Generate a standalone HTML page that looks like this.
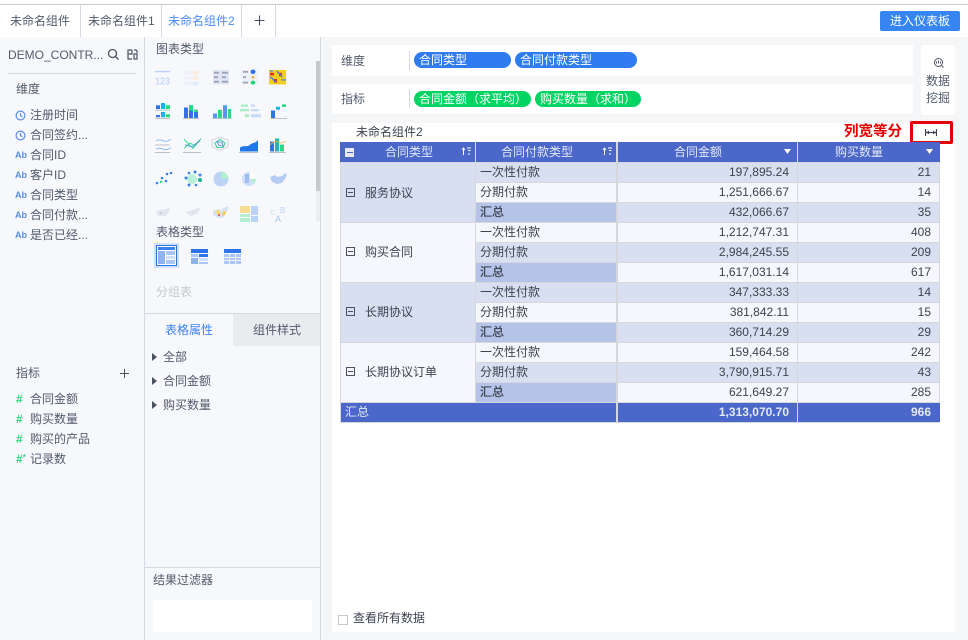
<!DOCTYPE html>
<html lang="zh"><head><meta charset="utf-8"><style>
*{box-sizing:border-box}
html,body{margin:0;padding:0}
body{width:968px;height:640px;position:relative;overflow:hidden;background:#f5f6f8;font:12px "Liberation Sans","Noto Sans CJK SC",sans-serif;color:#525a6c}
.a,.t,.r{position:absolute}
.t{white-space:nowrap;line-height:16px}
.sep{position:absolute;background:#d5dae2}
.c{position:absolute;white-space:nowrap;line-height:19px;height:19px;color:#3d4350;padding-left:4px}
.n{text-align:right;padding:0 8px 0 0;color:#3d4350}
.l{background:#d8dff1}.w{background:#f5f7fc}.s{background:#b5c3e9;-webkit-text-stroke:.25px #3d4350}
.pill{position:absolute;height:16px;border-radius:8px;color:#fff;line-height:16px;padding-left:5px;white-space:nowrap}
</style></head><body>
<div class="a" style="left:0;top:37px;width:320px;height:603px;background:#f7f8fb"></div>
<div class="a" style="left:0;top:0;width:968px;height:37px;background:#fff"></div>
<div class="a" style="left:0;top:4px;width:968px;height:1px;background:#c9c9c9"></div>
<div class="t" style="left:10px;top:13px">未命名组件</div>
<div class="t" style="left:88px;top:13px">未命名组件1</div>
<div class="t" style="left:168px;top:13px;color:#4a8cf5">未命名组件2</div>
<svg class="a" style="left:254px;top:15px" width="11" height="11" stroke="#4a5264" stroke-width="1.100"><path d="M5.500 .5v10M.5 5.500h10"/></svg>
<div class="sep" style="left:80px;top:5px;width:1px;height:32px"></div>
<div class="sep" style="left:161px;top:5px;width:1px;height:32px"></div>
<div class="sep" style="left:241px;top:5px;width:1px;height:32px"></div>
<div class="sep" style="left:275px;top:5px;width:1px;height:32px"></div>
<div class="a" style="left:880px;top:11px;width:80px;height:20px;background:#3685f2;border-radius:2px;color:#fff;text-align:center;line-height:20px">进入仪表板</div>

<!-- left panel -->
<div class="sep" style="left:144px;top:37px;width:1px;height:603px"></div>
<div class="t" style="left:8px;top:47px">DEMO_CONTR...</div>
<svg class="a" style="left:107px;top:48px" width="13" height="13" viewBox="0 0 13 13" fill="none" stroke="#4a5264" stroke-width="1.300"><circle cx="5.500" cy="5.500" r="4"/><path d="M8.500 8.500L11.500 11.500"/></svg>
<svg class="a" style="left:126px;top:48px" width="13" height="13" viewBox="0 0 13 13" fill="none" stroke="#4a5264" stroke-width="1.200"><path d="M6 2H2v9h4M6 2v4H2M8 2h2l1 1v2M8 6h3v5H8z"/></svg>
<div class="sep" style="left:8px;top:73px;width:128px;height:1px"></div>
<div class="t" style="left:16px;top:81px">维度</div>
<div class="t" style="left:30px;top:107px">注册时间</div>
<div class="t" style="left:30px;top:127px">合同签约...</div>
<div class="t" style="left:30px;top:147px">合同ID</div>
<div class="t" style="left:30px;top:167px">客户ID</div>
<div class="t" style="left:30px;top:187px">合同类型</div>
<div class="t" style="left:30px;top:207px">合同付款...</div>
<div class="t" style="left:30px;top:227px">是否已经...</div>
<svg class="a" style="left:15px;top:110px" width="11" height="11" viewBox="0 0 11 11" fill="none" stroke="#5b8de8" stroke-width="1.200"><circle cx="5.500" cy="5.500" r="4.400"/><path d="M5.500 3v2.700l2 1"/></svg>
<svg class="a" style="left:15px;top:130px" width="11" height="11" viewBox="0 0 11 11" fill="none" stroke="#5b8de8" stroke-width="1.200"><circle cx="5.500" cy="5.500" r="4.400"/><path d="M5.500 3v2.700l2 1"/></svg>
<div class="t" style="left:15px;top:147px;font-size:9px;color:#5b8de8;font-weight:bold">Ab</div>
<div class="t" style="left:15px;top:167px;font-size:9px;color:#5b8de8;font-weight:bold">Ab</div>
<div class="t" style="left:15px;top:187px;font-size:9px;color:#5b8de8;font-weight:bold">Ab</div>
<div class="t" style="left:15px;top:207px;font-size:9px;color:#5b8de8;font-weight:bold">Ab</div>
<div class="t" style="left:15px;top:227px;font-size:9px;color:#5b8de8;font-weight:bold">Ab</div>
<div class="t" style="left:16px;top:365px">指标</div>
<svg class="a" style="left:119px;top:368px" width="11" height="11" stroke="#4a5264" stroke-width="1"><path d="M5.500 1v9M1 5.500h9"/></svg>
<div class="t" style="left:30px;top:391px">合同金额</div>
<div class="t" style="left:30px;top:411px">购买数量</div>
<div class="t" style="left:30px;top:431px">购买的产品</div>
<div class="t" style="left:30px;top:451px">记录数</div>
<div class="t" style="left:16px;top:391px;color:#2fd67f;font-weight:bold">#</div>
<div class="t" style="left:16px;top:411px;color:#2fd67f;font-weight:bold">#</div>
<div class="t" style="left:16px;top:431px;color:#2fd67f;font-weight:bold">#</div>
<div class="t" style="left:16px;top:451px;color:#2fd67f;font-weight:bold">#<span style="font-size:8px;position:relative;top:-3px">*</span></div>

<!-- chart panel -->
<div class="a" style="left:320px;top:37px;width:1px;height:603px;background:#d5dae2"></div>
<div class="a" style="left:316px;top:61px;width:4px;height:130px;background:#c6c9cd"></div>
<div class="a" style="left:316px;top:191px;width:4px;height:30px;background:#eceef0"></div>
<div class="t" style="left:156px;top:41px">图表类型</div>

<svg class="a" style="left:153px;top:68px" width="150" height="155" viewBox="0 0 150 155">
<!-- row 1 -->
<g transform="translate(0,.2) scale(1,.9)">
<g opacity=".8"><rect x="2" y="3" width="15" height="1.500" fill="#a9c6f7"/><text x="2" y="18" font-size="11" font-weight="bold" fill="#b9d1f8" font-family="Liberation Sans" textLength="15" lengthAdjust="spacingAndGlyphs">123</text></g>
<g opacity=".55"><g fill="#e8ecf4"><rect x="31" y="3" width="15" height="4"/><rect x="31" y="9" width="15" height="4"/><rect x="31" y="15" width="15" height="4"/></g><rect x="40" y="3" width="5" height="4" fill="#fbe3bd"/><rect x="40" y="9" width="5" height="4" fill="#fbe3bd"/><rect x="40" y="15" width="5" height="4" fill="#cfe1fb"/></g>
<g fill="#dfe5f3"><rect x="60" y="2" width="16" height="16"/></g><g fill="#9aa2b4"><rect x="61" y="4" width="5" height="2"/><rect x="69" y="4" width="6" height="2"/><rect x="61" y="9" width="4" height="2"/><rect x="69" y="9" width="4" height="2"/><rect x="61" y="14" width="5" height="2"/><rect x="69" y="14" width="6" height="2"/></g>
<rect x="88" y="2" width="17" height="16" fill="#eef1f8"/><circle cx="100" cy="4" r="2.500" fill="#2d74ea"/><circle cx="100" cy="10" r="1.500" fill="#f5b13d"/><circle cx="100" cy="16" r="2.200" fill="#12d66f"/><g fill="#9aa3b5"><rect x="90" y="3" width="5" height="2"/><rect x="90" y="9" width="3" height="2"/><rect x="90" y="15" width="5" height="2"/></g>
<rect x="116" y="2" width="17" height="16" fill="#f4cf1e"/><path d="M117 5h4v3h-4zM121 12h3v4h-3zM126 5h3v4h-3z" fill="#e6332a"/><path d="M117 10c3 0 3 5 6 5M124 3c1 4 5 3 5 7M128 13h5M117 3h3" stroke="#3f7fe8" stroke-width="1.300" fill="none"/>
</g>
<!-- row 2 -->
<g transform="translate(0,9.500) scale(1,.75)">
<g fill="#2d74ea"><rect x="3" y="37" width="4" height="5"/><rect x="3" y="50" width="4" height="3"/></g><g fill="#0fb8e8"><rect x="8" y="34" width="4" height="8"/><rect x="8" y="46" width="4" height="7"/></g><g fill="#2ad885"><rect x="13" y="37" width="4" height="5"/><rect x="13" y="49" width="4" height="4"/></g><rect x="2" y="43" width="15" height="1" fill="#aab0bf"/><rect x="2" y="54" width="15" height="1" fill="#aab0bf"/>
<rect x="31" y="40" width="4" height="14" fill="#2d74ea"/><rect x="36" y="37" width="4" height="17" fill="#2d74ea"/><rect x="36" y="37" width="4" height="7" fill="#2ad885"/><rect x="41" y="43" width="4" height="11" fill="#2d74ea"/><rect x="41" y="43" width="4" height="3" fill="#2ad885"/><rect x="30" y="54" width="16" height="1" fill="#aab0bf"/>
<rect x="60" y="48" width="4" height="6" fill="#5b94f0"/><rect x="65" y="43" width="4" height="11" fill="#2ad885"/><rect x="70" y="37" width="4" height="17" fill="#5b94f0"/><rect x="75" y="42" width="3" height="12" fill="#2ad885"/><rect x="59" y="54" width="20" height="1" fill="#aab0bf"/>
<g fill="#a9ecc8"><rect x="88" y="36" width="7" height="3"/><rect x="87" y="42" width="9" height="3"/><rect x="92" y="49" width="4" height="4"/></g><g fill="#c5d9f8"><rect x="98" y="36" width="4" height="3"/><rect x="98" y="42" width="8" height="3"/><rect x="98" y="49" width="10" height="4"/></g>
<rect x="118" y="44" width="4" height="10" fill="#2d74ea"/><rect x="123" y="39" width="4" height="4" fill="#0fb8e8"/><rect x="129" y="36" width="4" height="3" fill="#12d66f"/><rect x="118" y="54" width="16" height="1" fill="#aab0bf"/>
</g>
<!-- row 3 -->
<g transform="translate(0,15.800) scale(1,.76)">
<g fill="none" stroke="#7faaf0" stroke-width="1"><path d="M3 75c5-4 8 3 12 0l3-2"/><path d="M3 86c5-4 8 3 12 0l3-2"/></g><rect x="2" y="80" width="15" height="1" fill="#aab0bf"/><rect x="2" y="90" width="15" height="1" fill="#aab0bf"/>
<path d="M31 73l9 12 8-13M31 85l6-7 4 3 6-7" fill="none" stroke="#2ad885" stroke-width="1"/><path d="M32 80l7 3 8-8" fill="none" stroke="#4f8ff0" stroke-width="1"/><rect x="30" y="90" width="18" height="1" fill="#aab0bf"/>
<path d="M67 70l8 4v9l-8 5-8-5v-9z" fill="#f1f3f7" stroke="#cfd3db"/><path d="M67 73l5 5-2 6h-6l-2-6z" fill="none" stroke="#25cf80"/><path d="M64 76l5 1 1 5-4-1z" fill="none" stroke="#4f8ff0"/>
<path d="M87 89v-5c4-4 8 0 10-4 3-3 5-1 8-6v15z" fill="#1f76e8"/><rect x="86" y="90" width="19" height="1" fill="#aab0bf"/>
<rect x="117" y="76" width="4" height="13" fill="#2d74ea"/><rect x="122" y="72" width="4" height="17" fill="#22b8a8"/><rect x="127" y="80" width="4" height="9" fill="#2ad885"/><path d="M117 80l6-5 4 3 6-2" stroke="#f5b13d" fill="none"/><rect x="116" y="90" width="17" height="1" fill="#aab0bf"/>
</g>
<!-- row 4 -->
<g fill="#3c7ff0"><circle cx="4" cy="115" r="1.300"/><circle cx="9" cy="110" r="1.300"/><circle cx="14" cy="106" r="1.300"/><circle cx="18" cy="105" r="1.300"/><circle cx="13" cy="113" r="1.300"/></g><circle cx="8" cy="114" r="1.200" fill="#2ad885"/>
<circle cx="39" cy="111" r="5" fill="#b9efd6"/><g fill="#3c7ff0"><circle cx="33" cy="110" r="1.500"/><circle cx="36" cy="105" r="1.300"/><circle cx="42" cy="104" r="1.500"/><circle cx="47" cy="107" r="1.500"/><circle cx="36" cy="117" r="1.500"/><circle cx="43" cy="117" r="1.300"/></g><circle cx="47" cy="112" r="2" fill="#14b59a"/>
<circle cx="68" cy="111" r="7.500" fill="#bcd3f8"/><path d="M68 111v-7.500a7.500 7.500 0 0 1 7.500 7.500z" fill="#b5edd0"/>
<circle cx="96" cy="111" r="7" fill="#cddffa"/><path d="M97 111v-7a7 7 0 0 1 6 7z" fill="#fff"/><path d="M97 111h6a7 7 0 0 1-2 5z" fill="#b5edd0"/><path d="M92 106h4v9h-4z" fill="#9dbdf0"/>
<path d="M117 109l5-2 2 2 5-1 3-3 2 2-2 4-3 4-5 1-5-2z" fill="#b6cdf3"/>
<!-- row 5 -->
<g opacity=".55"><path d="M3 144l5-3 3 1 6-3-1 5-3 4-8 0z" fill="#cfd8e8"/><circle cx="8" cy="145" r="1" fill="#8aa"/><path d="M32 144l8-2 8-3-3 6-7 3z" fill="#cfd8e8"/></g>
<path d="M60 143l5-2 3 1 6-4 2 2-3 5-3 5-5 0-5-3z" fill="#d7e3f5"/><path d="M62 143l4-1 2 3-3 2z" fill="#f7d973"/><path d="M70 144l3-1-1 4-3 1z" fill="#f6c83c"/><circle cx="66" cy="147" r="1" fill="#e34"/>
<rect x="87" y="138" width="10" height="7" fill="#f4dc95"/><rect x="87" y="146" width="10" height="3" fill="#b5edd0"/><rect x="87" y="150" width="10" height="4" fill="#b5edd0"/><rect x="98" y="138" width="7" height="9" fill="#bcd3f8"/><rect x="98" y="148" width="7" height="6" fill="#bcd3f8"/>
<text x="117" y="147" font-size="7" fill="#b5edd0" font-family="Liberation Sans">C</text><text x="122" y="154" font-size="9" fill="#a9c6f7" font-family="Liberation Sans">A</text><text x="127" y="145" font-size="8" fill="#bcd3f8" font-family="Liberation Sans">B</text>
</svg>

<div class="t" style="left:156px;top:224px">表格类型</div>
<div class="a" style="left:154px;top:243px;width:25px;height:25px;background:#cfe0fb"></div>
<div class="a" style="left:156px;top:245px;width:21px;height:21px;border:1px solid #2f74e6;background:#fff"></div>
<svg class="a" style="left:158px;top:247px" width="17" height="17"><rect width="17" height="3" fill="#3b82f0"/><rect y="4" width="7" height="13" fill="#8fb3ee"/><rect x="8" y="4" width="9" height="4" fill="#a9c6f7"/><rect x="8" y="9" width="9" height="3" fill="#cfe0fb"/><rect x="8" y="13" width="9" height="4" fill="#a9c6f7"/></svg>
<svg class="a" style="left:191px;top:249px" width="17" height="15"><rect width="17" height="4" fill="#2d74ea"/><rect y="5" width="7" height="3" fill="#a9c6f7"/><rect x="8" y="5" width="9" height="3" fill="#2d74ea"/><rect y="9" width="7" height="6" fill="#8fb3ee"/><rect x="8" y="9" width="9" height="3" fill="#cfe0fb"/><rect x="8" y="13" width="9" height="2" fill="#a9c6f7"/></svg>
<svg class="a" style="left:224px;top:249px" width="17" height="15"><rect width="17" height="4" fill="#2d74ea"/><g fill="#a9c6f7"><rect y="5" width="5" height="3"/><rect x="6" y="5" width="5" height="3"/><rect x="12" y="5" width="5" height="3"/><rect y="9" width="5" height="2"/><rect x="6" y="9" width="5" height="2"/><rect x="12" y="9" width="5" height="2"/><rect y="12" width="5" height="3"/><rect x="6" y="12" width="5" height="3"/><rect x="12" y="12" width="5" height="3"/></g></svg>
<div class="t" style="left:156px;top:284px;color:#c5c8ce">分组表</div>

<div class="a" style="left:145px;top:313px;width:175px;height:1px;background:#d5dae2"></div>
<div class="a" style="left:233px;top:314px;width:87px;height:32px;background:#e9ebef"></div>
<div class="t" style="left:165px;top:322px;color:#3d84f0">表格属性</div>
<div class="t" style="left:253px;top:322px">组件样式</div>
<svg class="a" style="left:152px;top:353px" width="6" height="8"><path d="M0 0l5 4-5 4z" fill="#4a5264"/></svg>
<svg class="a" style="left:152px;top:377px" width="6" height="8"><path d="M0 0l5 4-5 4z" fill="#4a5264"/></svg>
<svg class="a" style="left:152px;top:401px" width="6" height="8"><path d="M0 0l5 4-5 4z" fill="#4a5264"/></svg>
<div class="t" style="left:163px;top:349px">全部</div>
<div class="t" style="left:163px;top:373px">合同金额</div>
<div class="t" style="left:163px;top:397px">购买数量</div>
<div class="a" style="left:145px;top:567px;width:175px;height:1px;background:#d5dae2"></div>
<div class="t" style="left:153px;top:572px">结果过滤器</div>
<div class="a" style="left:153px;top:600px;width:159px;height:32px;background:#fff"></div>

<!-- top bars -->
<div class="a" style="left:332px;top:45px;width:581px;height:31px;background:#fff"></div>
<div class="a" style="left:332px;top:84px;width:581px;height:30px;background:#fff"></div>
<div class="a" style="left:921px;top:45px;width:34px;height:70px;background:#fff"></div>
<div class="t" style="left:341px;top:53px">维度</div>
<div class="t" style="left:341px;top:91px">指标</div>
<div class="sep" style="left:409px;top:51px;width:1px;height:19px"></div>
<div class="sep" style="left:409px;top:89px;width:1px;height:19px"></div>
<div class="pill" style="left:414px;top:52px;width:97px;background:#2f7bf0">合同类型</div>
<div class="pill" style="left:515px;top:52px;width:122px;background:#2f7bf0">合同付款类型</div>
<div class="pill" style="left:414px;top:91px;width:117px;background:#00d563">合同金额（求平均）</div>
<div class="pill" style="left:535px;top:91px;width:106px;background:#00d563">购买数量（求和）</div>
<svg class="a" style="left:933px;top:57px" width="11" height="11" fill="none" stroke="#4a5264"><circle cx="5.500" cy="5.500" r="4"/><path d="M3.500 6.500v-2M5.500 6.500v-3M7.500 6.500v-2M8.500 8.500l2 2"/></svg>
<div class="t" style="left:926px;top:73px">数据</div>
<div class="t" style="left:926px;top:90px">挖掘</div>

<!-- main card -->
<div class="a" style="left:332px;top:123px;width:623px;height:509px;background:#fff"></div>
<div class="t" style="left:356px;top:124px;color:#3d4350">未命名组件2</div>
<div class="t" style="left:844px;top:124px;color:#e60000;font-weight:bold;font-size:14.500px">列宽等分</div>
<div class="a" style="left:910px;top:121px;width:43px;height:23px;border:3px solid #e60000;border-radius:2px;background:#fff"></div>
<svg class="a" style="left:925px;top:128px" width="12" height="9" stroke="#3d4350" stroke-width="1.200" fill="#3d4350"><path d="M.5 1v7M11.500 1v7M1 4.500h10" fill="none"/><path d="M1.500 4.500l2.500-2v4zM10.500 4.500l-2.500-2v4z" stroke="none"/></svg>

<!-- table -->
<div class="a" style="left:340px;top:142px;width:600px;height:281px;background:#d4d7dc"></div>
<div class="a" style="left:340px;top:142px;width:135px;height:20px;background:#4a67c9"></div>
<div class="a" style="left:476px;top:142px;width:140px;height:20px;background:#4a67c9"></div>
<div class="a" style="left:618px;top:142px;width:179px;height:20px;background:#4a67c9"></div>
<div class="a" style="left:798px;top:142px;width:142px;height:20px;background:#4a67c9"></div>
<div class="t" style="left:385px;top:144px;color:#e4e9f7">合同类型</div>
<div class="t" style="left:501px;top:144px;color:#e4e9f7">合同付款类型</div>
<div class="t" style="left:674px;top:144px;color:#e4e9f7">合同金额</div>
<div class="t" style="left:835px;top:144px;color:#e4e9f7">购买数量</div>
<div class="a" style="left:345px;top:148px;width:9px;height:9px;background:#e6eaf6"></div><div class="a" style="left:346.500px;top:152px;width:6px;height:1px;background:#4a67c9"></div>
<svg class="a" style="left:461px;top:147px" width="10" height="9" stroke="#fff" fill="none"><path d="M2.500 8V2M1 3l1.500-2L4 3M6 1h4M7 3.500h2.500M8 6v2"/></svg>
<svg class="a" style="left:602px;top:147px" width="10" height="9" stroke="#fff" fill="none"><path d="M2.500 8V2M1 3l1.500-2L4 3M6 1h4M7 3.500h2.500M8 6v2"/></svg>
<svg class="a" style="left:784px;top:149px" width="8" height="5"><path d="M0 0h7l-3.500 5z" fill="#fff"/></svg>
<svg class="a" style="left:926px;top:149px" width="8" height="5"><path d="M0 0h7l-3.500 5z" fill="#fff"/></svg>

<!-- group cells -->
<div class="a l" style="left:341px;top:163px;width:134px;height:59px"></div>
<div class="a w" style="left:341px;top:223px;width:134px;height:59px"></div>
<div class="a l" style="left:341px;top:283px;width:134px;height:59px"></div>
<div class="a w" style="left:341px;top:343px;width:134px;height:59px"></div>
<div class="t" style="left:365px;top:185px;color:#3d4350">服务协议</div>
<div class="t" style="left:365px;top:244px;color:#3d4350">购买合同</div>
<div class="t" style="left:365px;top:304px;color:#3d4350">长期协议</div>
<div class="t" style="left:365px;top:364px;color:#3d4350">长期协议订单</div>
<svg class="a" style="left:346px;top:188px" width="9" height="9" fill="none" stroke="#4a5264"><path d="M.5.500h8v8h-8zM2 4.500h5"/></svg>
<svg class="a" style="left:346px;top:247px" width="9" height="9" fill="none" stroke="#4a5264"><path d="M.5.500h8v8h-8zM2 4.500h5"/></svg>
<svg class="a" style="left:346px;top:307px" width="9" height="9" fill="none" stroke="#4a5264"><path d="M.5.500h8v8h-8zM2 4.500h5"/></svg>
<svg class="a" style="left:346px;top:367px" width="9" height="9" fill="none" stroke="#4a5264"><path d="M.5.500h8v8h-8zM2 4.500h5"/></svg>

<div class="c l" style="left:476px;top:163px;width:140px">一次性付款</div><div class="c n l" style="left:618px;top:163px;width:179px">197,895.24</div><div class="c n l" style="left:798px;top:163px;width:141px">21</div>
<div class="c w" style="left:476px;top:183px;width:140px">分期付款</div><div class="c n w" style="left:618px;top:183px;width:179px">1,251,666.67</div><div class="c n w" style="left:798px;top:183px;width:141px">14</div>
<div class="c s" style="left:476px;top:203px;width:140px">汇总</div><div class="c n l" style="left:618px;top:203px;width:179px">432,066.67</div><div class="c n l" style="left:798px;top:203px;width:141px">35</div>
<div class="c w" style="left:476px;top:223px;width:140px">一次性付款</div><div class="c n w" style="left:618px;top:223px;width:179px">1,212,747.31</div><div class="c n w" style="left:798px;top:223px;width:141px">408</div>
<div class="c l" style="left:476px;top:243px;width:140px">分期付款</div><div class="c n l" style="left:618px;top:243px;width:179px">2,984,245.55</div><div class="c n l" style="left:798px;top:243px;width:141px">209</div>
<div class="c s" style="left:476px;top:263px;width:140px">汇总</div><div class="c n w" style="left:618px;top:263px;width:179px">1,617,031.14</div><div class="c n w" style="left:798px;top:263px;width:141px">617</div>
<div class="c l" style="left:476px;top:283px;width:140px">一次性付款</div><div class="c n l" style="left:618px;top:283px;width:179px">347,333.33</div><div class="c n l" style="left:798px;top:283px;width:141px">14</div>
<div class="c w" style="left:476px;top:303px;width:140px">分期付款</div><div class="c n w" style="left:618px;top:303px;width:179px">381,842.11</div><div class="c n w" style="left:798px;top:303px;width:141px">15</div>
<div class="c s" style="left:476px;top:323px;width:140px">汇总</div><div class="c n l" style="left:618px;top:323px;width:179px">360,714.29</div><div class="c n l" style="left:798px;top:323px;width:141px">29</div>
<div class="c w" style="left:476px;top:343px;width:140px">一次性付款</div><div class="c n w" style="left:618px;top:343px;width:179px">159,464.58</div><div class="c n w" style="left:798px;top:343px;width:141px">242</div>
<div class="c l" style="left:476px;top:363px;width:140px">分期付款</div><div class="c n l" style="left:618px;top:363px;width:179px">3,790,915.71</div><div class="c n l" style="left:798px;top:363px;width:141px">43</div>
<div class="c s" style="left:476px;top:383px;width:140px">汇总</div><div class="c n w" style="left:618px;top:383px;width:179px">621,649.27</div><div class="c n w" style="left:798px;top:383px;width:141px">285</div>
<div class="a" style="left:341px;top:403px;width:275px;height:19px;background:#4a67c9;color:#e4e9f7;line-height:19px;padding-left:4px">汇总</div>
<div class="a" style="left:618px;top:403px;width:179px;height:19px;background:#4a67c9;color:#e4e9f7;line-height:19px;text-align:right;padding-right:8px;font-weight:bold">1,313,070.70</div>
<div class="a" style="left:798px;top:403px;width:142px;height:19px;background:#4a67c9;color:#e4e9f7;line-height:19px;text-align:right;padding-right:9px;font-weight:bold">966</div>

<div class="a" style="left:338px;top:615px;width:10px;height:10px;border:1px solid #c5c8ce;background:#fff"></div>
<div class="t" style="left:353px;top:610px;color:#3d4350">查看所有数据</div>
</body></html>
